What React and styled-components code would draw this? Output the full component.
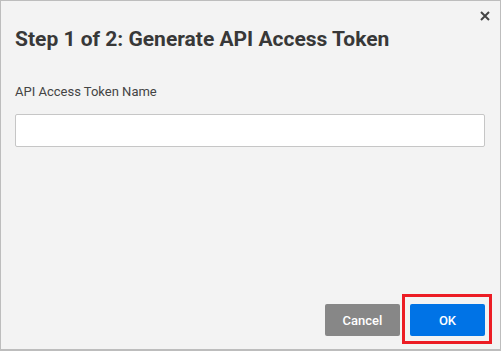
import React from "react";
import styled, { createGlobalStyle } from "styled-components";

const Global = createGlobalStyle`
  html, body { margin: 0; padding: 0; }
  body { font-family: Roboto, "Liberation Sans", Arial, sans-serif; }
  * { box-sizing: border-box; }
`;

const Dialog = styled.div`
  position: relative;
  width: 501px;
  height: 351px;
  background: #f3f3f3;
  border: 1px solid #bdbdbd;
  border-bottom-width: 2px;
  display: flex;
  flex-direction: column;
  padding: 26px 15px 13px 14px;
`;

const CloseButton = styled.button`
  position: absolute;
  top: 9px;
  right: 9px;
  width: 12px;
  height: 12px;
  padding: 0;
  border: none;
  background: transparent;
  display: flex;
  align-items: center;
  justify-content: center;
  cursor: pointer;
`;

const Title = styled.h1`
  margin: 0;
  font-family: Roboto, "Liberation Sans", sans-serif;
  font-size: 21px;
  line-height: 24px;
  font-weight: 700;
  color: #383838;
`;

const Label = styled.label`
  margin: 33px 0 0 0;
  font-size: 13px;
  line-height: 16px;
  color: #444;
`;

const Input = styled.input`
  margin-top: 14px;
  width: 470px;
  height: 33px;
  border: 1px solid #c6c6c6;
  border-radius: 2px;
  background: #fff;
  font-family: Roboto, sans-serif;
  font-size: 14px;
  padding: 0 8px;
  outline: none;
`;

const Spacer = styled.div`
  flex: 1;
`;

const Footer = styled.div`
  display: flex;
  justify-content: flex-end;
  gap: 10px;
`;

const Button = styled.button`
  width: 75px;
  height: 32px;
  border: none;
  border-radius: 2px;
  background: ${(p) => (p.$primary ? "#0073e6" : "#878787")};
  color: #fff;
  font-family: Roboto, sans-serif;
  font-size: 13px;
  font-weight: 500;
  cursor: pointer;
`;

const Highlight = styled.div`
  position: absolute;
  left: 401px;
  top: 293px;
  width: 90px;
  height: 50px;
  border: 3px solid #ec1c24;
  pointer-events: none;
`;

export default function App() {
  return (
    <>
      <Global />
      <Dialog>
        <CloseButton aria-label="Close">
          <svg width="10" height="10" viewBox="0 0 10 10">
            <path d="M1 1 L9 9 M9 1 L1 9" stroke="#444" strokeWidth="2" />
          </svg>
        </CloseButton>
        <Title>Step 1 of 2: Generate API Access Token</Title>
        <Label>API Access Token Name</Label>
        <Input type="text" />
        <Spacer />
        <Footer>
          <Button>Cancel</Button>
          <Button $primary>OK</Button>
        </Footer>
        <Highlight />
      </Dialog>
    </>
  );
}
